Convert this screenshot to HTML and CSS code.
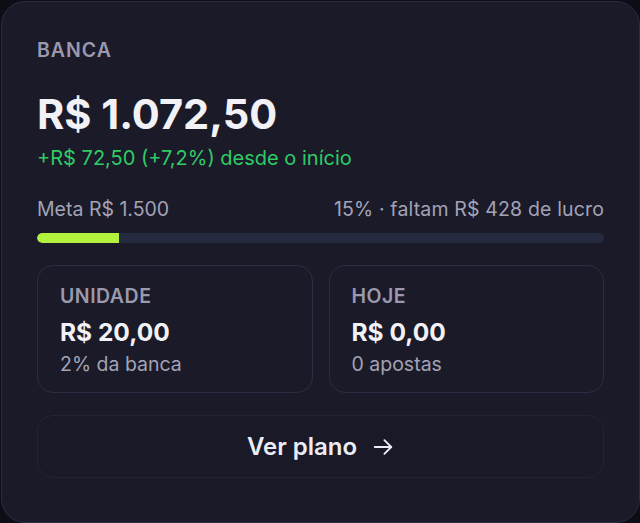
FILE: index.html
```html
<!DOCTYPE html>
<html lang="pt-BR">
<head>
    <meta charset="UTF-8">
    <meta name="viewport" content="width=device-width, initial-scale=1.0">
    <title>Banca</title>
    <link rel="stylesheet" href="styles.css">
</head>
<body>

    <div class="card">
        <div class="label">BANCA</div>
        <div class="balance">R$ 1.072,50</div>
        <div class="gain">+R$ 72,50 (+7,2%) desde o início</div>

        <div class="goal-row">
            <span>Meta R$ 1.500</span>
            <span>15% · faltam R$ 428 de lucro</span>
        </div>
        <div class="bar">
            <div class="bar-fill" style="width: 14.5%"></div>
        </div>

        <div class="stats">
            <div class="stat">
                <div class="label">UNIDADE</div>
                <div class="stat-value">R$ 20,00</div>
                <div class="stat-sub">2% da banca</div>
            </div>
            <div class="stat">
                <div class="label">HOJE</div>
                <div class="stat-value">R$ 0,00</div>
                <div class="stat-sub">0 apostas</div>
            </div>
        </div>

        <button class="btn-plan">
            Ver plano
            <svg width="22" height="22" viewBox="0 0 24 24" fill="none" stroke="currentColor" stroke-width="2" stroke-linecap="round" stroke-linejoin="round">
                <path d="M3 12h18"/>
                <path d="M13.5 4.5L21 12l-7.5 7.5"/>
            </svg>
        </button>
    </div>

</body>
</html>
```

FILE: styles.css
```css
body {
    font-family: 'Inter', 'Noto Sans', sans-serif;
    background-color: #0d0d16;
    margin: 0;
    padding: 0;
}

.card {
    box-sizing: border-box;
    width: 639px;
    height: 522px;
    margin: 1px 0 0 1px;
    padding: 36px 35px 0 35px;
    background-color: #1a1a29;
    border: 1px solid #2b2b42;
    border-radius: 24px;
}

.label {
    font-size: 19.5px;
    font-weight: 600;
    letter-spacing: 1px;
    color: #9a99ad;
    line-height: 24px;
}

.balance {
    margin-top: 27px;
    font-size: 41.5px;
    font-weight: 700;
    color: #f1f1f6;
    line-height: 50px;
}

.gain {
    margin-top: 6px;
    font-size: 20px;
    color: #2fcc66;
    line-height: 26px;
}

.goal-row {
    display: flex;
    justify-content: space-between;
    margin-top: 25px;
    font-size: 19.5px;
    color: #a3a3b6;
    line-height: 26px;
}

.goal-row span:last-child {
    letter-spacing: 0.15px;
}

.bar {
    margin-top: 11px;
    height: 10px;
    background-color: #262a40;
    border-radius: 5px;
    overflow: hidden;
}

.bar-fill {
    height: 100%;
    background-color: #b3f23c;
    border-radius: 5px 0 0 5px;
}

.stats {
    display: grid;
    grid-template-columns: 1fr 1fr;
    gap: 16px;
    margin-top: 22px;
}

.stat {
    padding: 18px 22px 15px;
    border: 1px solid #2c2c44;
    border-radius: 16px;
}

.stat .label {
    letter-spacing: 0.5px;
}

.stat-value {
    margin-top: 9px;
    font-size: 24.5px;
    font-weight: 700;
    color: #f1f1f6;
    line-height: 30px;
}

.stat-sub {
    margin-top: 4px;
    font-size: 19.5px;
    color: #a3a3b6;
    line-height: 26px;
}

.btn-plan {
    display: flex;
    align-items: center;
    justify-content: center;
    gap: 15px;
    width: 100%;
    height: 63px;
    margin-top: 22px;
    font-family: inherit;
    font-size: 24px;
    font-weight: 600;
    color: #ececf4;
    background-color: #191928;
    border: 1px solid #23233a;
    border-radius: 16px;
    cursor: pointer;
}
```
